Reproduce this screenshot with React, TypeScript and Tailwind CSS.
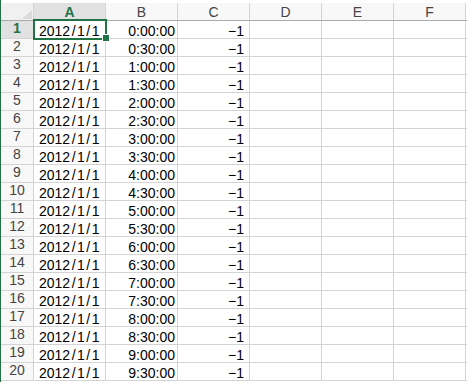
import React from "react";

const cols = ["A", "B", "C", "D", "E", "F"];
const times = [
  "0:00:00", "0:30:00", "1:00:00", "1:30:00", "2:00:00", "2:30:00", "3:00:00",
  "3:30:00", "4:00:00", "4:30:00", "5:00:00", "5:30:00", "6:00:00", "6:30:00",
  "7:00:00", "7:30:00", "8:00:00", "8:30:00", "9:00:00", "9:30:00",
];

const dataFont = { fontFamily: '"Liberation Sans", Arial, sans-serif' };

function DateText() {
  return (
    <span>
      2012<span className="px-[1.5px]">/</span>1<span className="px-[1.5px]">/</span>1
    </span>
  );
}

export default function App() {
  return (
    <div className="relative w-[467px] h-[382px] overflow-hidden bg-white" style={dataFont}>
      <div className="flex h-full">
        <div className="w-[1px] shrink-0 bg-[#217346]" />
        <div className="flex-1 flex flex-col">
          <div className="h-[3px] bg-white" />
          {/* column header row */}
          <div className="flex h-[18px] border-b border-[#ababab]">
            <div className="relative w-[33px] shrink-0 bg-[#f0f0f0] border-r border-[#d4d4d4]">
              <svg className="absolute right-[1px] bottom-[1px]" width="10" height="9" viewBox="0 0 10 9">
                <polygon points="10,0 10,9 0,9" fill="#dadada" />
              </svg>
            </div>
            {cols.map((c, i) => (
              <div
                key={c}
                className={
                  i === 0
                    ? "w-[72px] shrink-0 flex items-center justify-center bg-[#e1e1e1] border-r border-[#d4d4d4] text-[14px] leading-[18px] text-[#217346] font-bold"
                    : "w-[72px] shrink-0 flex items-center justify-center bg-[#f8f8f8] border-r border-[#d4d4d4] text-[14px] leading-[18px] text-[#444444]"
                }
              >
                {c}
              </div>
            ))}
          </div>
          {/* rows */}
          {times.map((t, r) => (
            <div key={r} className="flex h-[18px] border-b border-[#d4d4d4]">
              <div
                className={
                  r === 0
                    ? "w-[33px] shrink-0 h-[17px] flex items-end justify-center leading-[20px] bg-[#e1e1e1] border-r border-[#d4d4d4] text-[14px] text-[#217346] font-semibold"
                    : "w-[33px] shrink-0 h-[17px] flex items-end justify-center leading-[20px] bg-[#f8f8f8] border-r border-[#d4d4d4] text-[14px] text-[#444444]"
                }
              >
                {r + 1}
              </div>
              <div className="w-[72px] shrink-0 h-[17px] border-r border-[#d4d4d4] pl-[5px] text-[14px] leading-[21px] text-black whitespace-nowrap">
                <DateText />
              </div>
              <div className="w-[72px] shrink-0 h-[17px] border-r border-[#d4d4d4] pr-[2px] text-right text-[14px] leading-[21px] text-black whitespace-nowrap">
                {t}
              </div>
              <div className="w-[72px] shrink-0 h-[17px] border-r border-[#d4d4d4] pr-[5px] text-right text-[14px] leading-[21px] text-black whitespace-nowrap">
                −1
              </div>
              <div className="w-[72px] shrink-0 h-[17px] border-r border-[#d4d4d4]" />
              <div className="w-[72px] shrink-0 h-[17px] border-r border-[#d4d4d4]" />
              <div className="w-[72px] shrink-0 h-[17px] border-r border-[#d4d4d4]" />
            </div>
          ))}
        </div>
      </div>
      {/* selection box over A1 */}
      <div className="absolute left-[33px] top-[19px] w-[74px] h-[21px] border-2 border-[#217346] pointer-events-none" />
      <div className="absolute left-[103px] top-[35px] w-[6px] h-[6px] bg-[#217346] outline outline-1 outline-white" />
    </div>
  );
}
